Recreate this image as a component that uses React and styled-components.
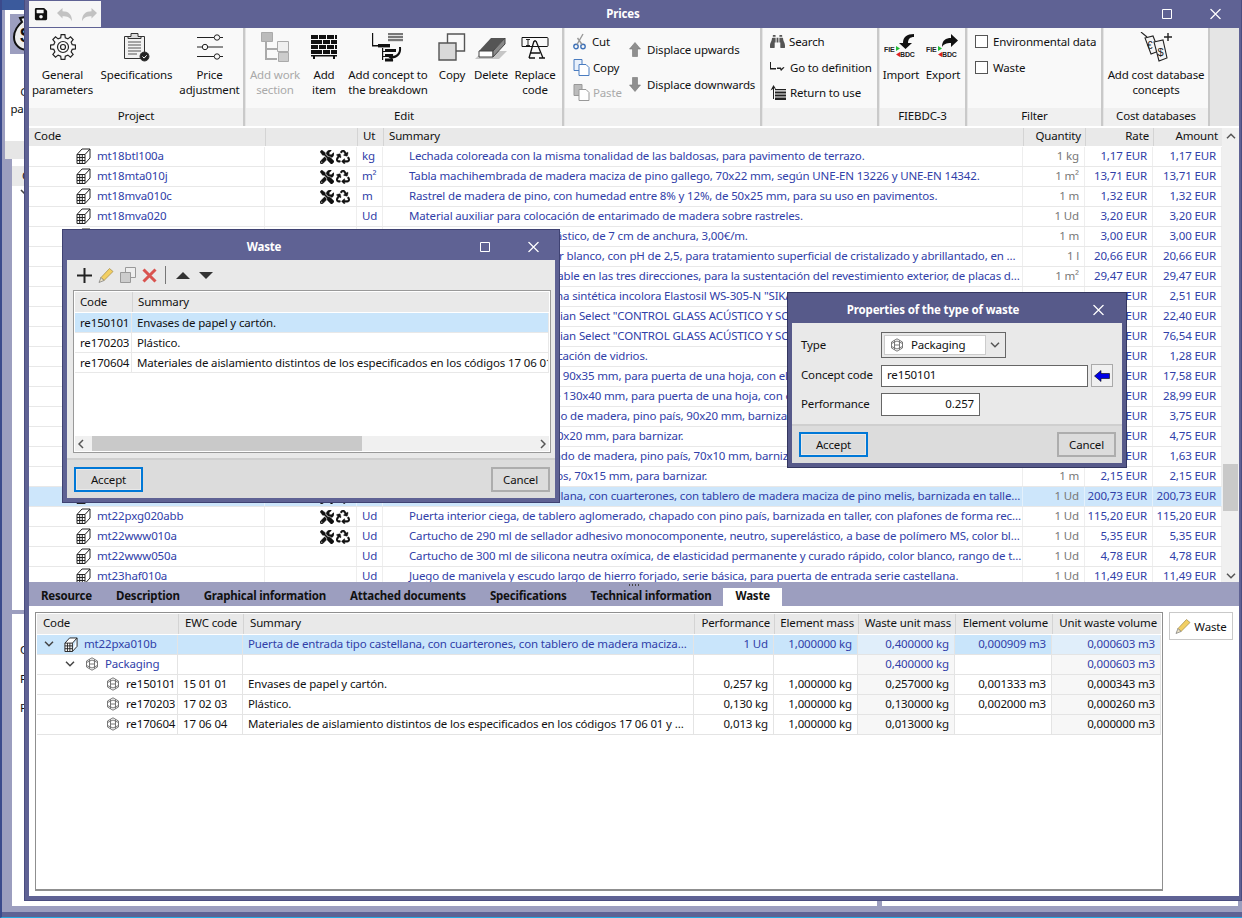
import React from "react";
import styled, { createGlobalStyle } from "styled-components";
import { FaTools, FaRecycle, FaSave, FaBinoculars } from "react-icons/fa";

const FONT = `"Noto Sans", "Open Sans", sans-serif`;
const FRAME = "#5f6294";
const LAV = "#9c9ebf";
const BLUE = "#3040a8";

const Global = createGlobalStyle`
  html, body { margin: 0; padding: 0; background: #fff; overflow: hidden; }
  * { box-sizing: border-box; }
`;

const Desk = styled.div`
  position: relative; width: 1242px; height: 918px; overflow: hidden;
  font: 11.5px/15px ${FONT}; letter-spacing: -0.15px; color: #111; background: #fff;
`;

/* ---------- back window ---------- */
const BackWin = styled.div`
  position: absolute; inset: 0; display: flex; flex-direction: column;
  border-left: 2px solid #3b4a8c; border-bottom: 1px solid #25a9e0; background: ${LAV};
`;
const BackTop = styled.div`height: 10px; background: #3b5a9c; flex: none;`;
const BackRibbon = styled.div`
  height: 131px; flex: none; background: #fff; margin-left: 3px; padding: 4px 0 0 5px;
`;
const BackBtnText = styled.div`margin: 26px 0 0 0; width: 62px; text-align: center; line-height: 17px;`;
const BackStrip = styled.div`height: 18px; flex: none; margin-left: 3px; background: #e6e6e6;`;
const BackBody = styled.div`height: 451px; flex: none; margin: 0 0 0 10px; background: #fff;`;
const BackHead = styled.div`height: 20px; margin-top: 7px; background: #e9e9e9; padding: 2px 0 0 10px;`;
const BackChevron = styled.svg`display: block; margin: 3px 0 0 8px;`;
const BackLower = styled.div`
  flex: 1; display: flex; margin: 4px 4px 0 10px; gap: 5px; margin-bottom: 0;
`;
const BackPane = styled.div`
  background: #fff; flex: ${(p) => p.$grow}; padding: 28px 0 0 8px; display: flex; flex-direction: column; gap: 14px;
`;
const BackBottom = styled.div`height: 11px; flex: none; background: linear-gradient(${LAV} 0 6px, ${FRAME} 6px);`;

/* ---------- windows ---------- */
const Win = styled.div`
  position: absolute; display: flex; flex-direction: column;
  left: ${(p) => p.$x}px; top: ${(p) => p.$y}px; width: ${(p) => p.$w}px; height: ${(p) => p.$h}px;
  background: ${(p) => p.$frame || FRAME};
  border: 1px solid ${(p) => p.$edge || "#3f4272"};
  padding: ${(p) => p.$pt ?? 0}px ${(p) => p.$pr ?? 4}px ${(p) => p.$pb ?? 4}px 4px;
`;
const TitleBar = styled.div`
  position: relative; height: ${(p) => p.$h}px; flex: none; display: flex; align-items: center; justify-content: center;
  color: #fff; font-weight: 700; font-size: 11.5px; padding-right: ${(p) => p.$off}px; padding-bottom: 1px;
`;
const WinBtn = styled.span`
  position: absolute; top: 50%; transform: translateY(-50%); right: ${(p) => p.$r}px; display: flex;
`;
const Qat = styled.div`
  position: absolute; left: 0; top: 1px; width: 72px; height: 26px; background: #f6f6f6;
  display: flex; align-items: center; gap: 8px; padding: 0 0 0 5px;
`;
const WinBody = styled.div`flex: 1; min-height: 0; display: flex; flex-direction: column; background: #fff;`;

/* ---------- ribbon ---------- */
const Ribbon = styled.div`height: 98px; flex: none; display: flex; background: #e5e5e5;`;
const Group = styled.div`
  width: ${(p) => p.$w}px; flex: none; display: flex; flex-direction: column;
  border-right: 2px solid #c9c9c9; margin-right: 1px; background: #f9f9f9;
`;
const GroupBody = styled.div`height: 80px; flex: none; display: flex; justify-content: ${(p) => p.$j || "flex-start"};`;
const GroupLabel = styled.div`
  height: 18px; flex: none; background: #f0f0f0; text-align: center; line-height: 16px;
`;
const RBtn = styled.div`
  width: ${(p) => p.$w}px; flex: none; text-align: center; padding-top: 1px;
  color: ${(p) => (p.$off ? "#a9a9a9" : "#111")}; white-space: nowrap;
`;
const RIcon = styled.div`height: 36px; display: flex; align-items: center; justify-content: center; margin-bottom: 2px;`;
const SmallCol = styled.div`
  display: flex; flex-direction: column; width: ${(p) => p.$w}px; flex: none; justify-content: ${(p) => p.$j || "flex-start"};
  padding: ${(p) => p.$pt ?? 5}px 0 0 ${(p) => p.$pl ?? 0}px; gap: ${(p) => p.$gap ?? 0}px;
`;
const SmallItem = styled.div`
  display: flex; align-items: center; gap: ${(p) => p.$gap ?? 3}px; height: ${(p) => p.$h || 25.5}px; white-space: nowrap;
  color: ${(p) => (p.$off ? "#a9a9a9" : "#111")};
  & > svg { flex: none; }
`;
const Check = styled.span`
  width: 13px; height: 13px; border: 1px solid #555; background: #fff; flex: none;
`;

/* ---------- main table ---------- */
const COLS = "236px 92px 26px 640px 62px 68px 69px";
const TableWrap = styled.div`
  height: 454px; flex: none; margin-top: 2px; display: flex; position: relative; overflow: hidden;
`;
const TableInner = styled.div`flex: 1; min-width: 0; overflow: hidden;`;
const HeadRow = styled.div`
  display: grid; grid-template-columns: ${COLS}; height: 18px; background: #e9e9e9; margin-bottom: 1px;
`;
const HeadCell = styled.div`
  padding: 0 ${(p) => (p.$right ? 4 : 5)}px; line-height: 16px; text-align: ${(p) => (p.$right ? "right" : "left")};
  border-left: ${(p) => (p.$first ? "0" : "1px solid #d4d4d4")};
  white-space: nowrap; overflow: hidden;
`;
const Row = styled.div`
  display: grid; grid-template-columns: ${COLS}; height: 20px; border-bottom: 1px solid #e8e8e8;
  background: ${(p) => (p.$sel ? "#cde6fb" : "#fff")}; color: ${BLUE};
`;
const Cell = styled.div`
  padding: 0 ${(p) => (p.$right ? 5 : 0)}px 0 ${(p) => p.$pl ?? 0}px; line-height: 18px; white-space: nowrap; overflow: hidden;
  text-overflow: ellipsis; text-align: ${(p) => (p.$right ? "right" : "left")};
  border-right: 1px solid ${(p) => (p.$sel ? "#e4f1fc" : "#eeeeee")};
  color: ${(p) => (p.$gray ? "#777" : "inherit")};
`;
const CodeCell = styled(Cell)`display: flex; align-items: center; gap: 6px; padding-bottom: 1px;`;
const IconCell = styled(Cell)`
  display: flex; align-items: center; justify-content: flex-end; gap: 2px; padding-right: 6px; color: #111;
  & > svg { stroke: currentColor; stroke-width: 14px; }
`;
const VScroll = styled.div`
  width: 17px; flex: none; background: #f0f0f0; position: relative; display: flex; flex-direction: column; justify-content: space-between; align-items: center; padding: 5px 0 3px;
`;
const VThumb = styled.div`position: absolute; left: 1px; right: 1px; top: 336px; height: 47px; background: #c9c9c9;`;

/* ---------- detail ---------- */
const TabBar = styled.div`
  height: 24px; flex: none; background: ${LAV}; display: flex; align-items: flex-end; padding-left: 12px; gap: 24px; position: relative;
`;
const Tab = styled.div`
  font-weight: 700; color: #111; height: 18px; line-height: 16px; white-space: nowrap; letter-spacing: -0.2px;
  ${(p) => p.$active && `background:#fff; padding:0 12px; margin-left:-12px;`}
`;
const Dots = styled.span`
  position: absolute; left: 600px; top: 2px; width: 12px; height: 2px;
  background: repeating-linear-gradient(90deg, #444 0 1px, transparent 1px 3px);
`;
const Detail = styled.div`flex: 1; min-height: 0; display: flex; padding: 6px; gap: 6px; background: #fff;`;
const WastePanel = styled.div`
  width: 1128px; height: 279px; flex: none; border: 1px solid #8f8f8f; border-bottom-width: 2px; padding: 1px;
`;
const WCOLS = "141px 65px 451px 80px 84px 97px 97px 109px";
const WHead = styled.div`display: grid; grid-template-columns: ${WCOLS}; height: 20px; background: #e9e9e9; margin-bottom: 1px;`;
const WHCell = styled.div`
  padding: 0 ${(p) => (p.$right ? 4 : 6)}px; line-height: 18px; white-space: nowrap; overflow: hidden;
  text-align: ${(p) => (p.$right ? "right" : "left")};
  border-left: ${(p) => (p.$first ? "0" : "1px solid #d4d4d4")};
`;
const WRow = styled.div`
  display: grid; grid-template-columns: ${WCOLS}; height: 20px; border-bottom: 1px solid #e4e4e4;
  background: ${(p) => (p.$sel ? "#c9e5fb" : "#fff")}; color: ${(p) => (p.$blue ? BLUE : "#111")};
`;
const WCell = styled.div`
  padding: 0 5px ${(p) => (p.$tree ? 1 : 0)}px ${(p) => p.$pl ?? 5}px; line-height: 18px; white-space: nowrap; overflow: hidden; text-overflow: ellipsis;
  text-align: ${(p) => (p.$right ? "right" : "left")};
  border-right: 1px solid #e4e4e4;
  background: ${(p) => (p.$tint ? (p.$sel ? "#e0eefa" : "#f7f7f7") : "transparent")};
  display: ${(p) => (p.$tree ? "flex" : "block")}; align-items: center; gap: 6px;
`;
const TreeChev = styled.span`display: flex; margin-right: 4px;`;
const WasteBtn = styled.div`
  width: 64px; height: 28px; border: 1px solid #c9c9c9; display: flex; align-items: center; justify-content: center; gap: 3px; background: #fff;
`;

/* ---------- dialogs ---------- */
const DlgBody = styled.div`flex: 1; display: flex; flex-direction: column; background: #e9e9e9; min-height: 0;`;
const DlgTools = styled.div`height: 30px; flex: none; display: flex; align-items: center; padding: 0 0 0 10px; gap: 6px;`;
const ToolSep = styled.span`width: 1px; height: 18px; background: #777; margin: 0 3px 0 2px;`;
const TriPair = styled.span`display: flex; align-items: center; gap: 9px; margin-left: 1px; & > svg { flex: none; }`;
const ListBox = styled.div`
  width: 478px; height: 163px; flex: none; margin-left: 6px; border: 1px solid #999; background: #fff; padding: 1px;
  display: flex; flex-direction: column; overflow: hidden;
`;
const LCOLS = "57px 1fr";
const LHead = styled.div`display: grid; grid-template-columns: ${LCOLS}; height: 20px; background: #e9e9e9; flex: none; margin-bottom: 1px;`;
const LHCell = styled.div`padding: 1px 0 0 5px; line-height: 18px; border-left: ${(p) => (p.$first ? "0" : "1px solid #d4d4d4")};`;
const LRow = styled.div`
  display: grid; grid-template-columns: ${LCOLS}; height: 20px; flex: none; border-bottom: 1px solid #e8e8e8;
  background: ${(p) => (p.$sel ? "#c9e5fb" : "#fff")};
`;
const LCell = styled.div`padding: 1px 0 0 5px; line-height: 18px; white-space: nowrap; overflow: hidden; border-right: 1px solid #e8e8e8;`;
const HScroll = styled.div`
  margin-top: auto; height: 15px; flex: none; background: #f0f0f0; display: flex; align-items: center; justify-content: space-between; position: relative; padding: 0 3px;
`;
const HThumb = styled.div`position: absolute; left: 17px; top: 0; width: 270px; height: 15px; background: #c9c9c9;`;
const DlgFoot = styled.div`
  margin-top: ${(p) => p.$mt}px; flex: 1; background: #dcdcdc; border-top: 2px solid #cfcfcf; display: flex; justify-content: space-between; align-items: flex-start;
  padding: ${(p) => p.$pt}px ${(p) => p.$pr}px 0 ${(p) => p.$pl}px;
`;
const Btn = styled.div`
  width: ${(p) => p.$w}px; height: ${(p) => p.$h}px; display: flex; align-items: center; justify-content: center; padding-bottom: 1px;
  border: ${(p) => (p.$primary ? "2px solid #0078d7" : "2px solid #adadad")};
  outline: 1px solid ${(p) => (p.$primary ? "#e9e9e9" : "transparent")}; outline-offset: -3px;
`;
const Form = styled.div`
  display: grid; grid-template-columns: 80px auto; align-items: center; padding: 9px 0 0 9px; row-gap: 6px; flex: none;
`;
const FLabel = styled.div`white-space: nowrap; padding-bottom: 2px;`;
const FRow = styled.div`display: flex; align-items: center; gap: 3px;`;
const SelectBox = styled.div`
  width: 125px; height: 26px; border: 1px solid #666; background: #e9e9e9; display: flex; align-items: stretch; padding: 2px;
`;
const SelectInner = styled.div`
  width: 102px; flex: none; background: #fff; border: 1px solid #ccc; display: flex; align-items: center; gap: 7px; padding: 0 0 1px 5px;
`;
const SelectArrow = styled.div`flex: 1; display: flex; align-items: center; justify-content: center;`;
const TextInput = styled.div`
  width: ${(p) => p.$w}px; height: ${(p) => p.$h}px; background: #fff; border: 1px solid #666; line-height: ${(p) => p.$h - 4}px;
  padding: 0 5px; text-align: ${(p) => (p.$right ? "right" : "left")};
`;
const ArrowBtn = styled.div`
  width: 22px; height: 23px; border: 1px solid #aaa; background: #f0f0f0; display: flex; align-items: center; justify-content: center;
`;

/* ---------- icons ---------- */
const Cube = ({ s = 15 }) => (
  <svg width={s} height={s + 1} viewBox="0 0 15 16" fill="none" stroke="#222" strokeWidth="1" style={{ flex: "none" }}>
    <path d="M1 6.5h8v9H1zM1 6.5 6 1h8L9 6.5M14 1v9l-5 5.500" fill="#fff" />
    <path d="M1 9.500h8M1 12.500h8M3.700 6.500v9M6.300 6.500v9" />
  </svg>
);
const WasteIco = ({ s = 14 }) => (
  <svg width={s} height={s} viewBox="0 0 14 14" fill="none" stroke="#777" strokeWidth="1" style={{ flex: "none" }}>
    <path d="M7 .8 12.500 4v6L7 13.200 1.500 10V4z" />
    <path d="M1.500 5.500 7 3l5.500 2.500M1.500 8.500 7 11l5.500-2.500M4.500 2.300v9.400M9.500 2.300v9.400M4.500 7h5" />
  </svg>
);
const Close = ({ s = 11 }) => (
  <svg width={s} height={s} viewBox="0 0 11 11" stroke="#fff" strokeWidth="1.2"><path d="M.5.5l10 10M10.500.5l-10 10" /></svg>
);
const Max = ({ s = 10 }) => (
  <svg width={s} height={s} viewBox="0 0 10 10" fill="none" stroke="#fff"><path d="M.5.5h9v9h-9z" /></svg>
);
const gearPath = (() => {
  const pts = [];
  const n = 8;
  for (let i = 0; i < n; i++) {
    const a = (i / n) * Math.PI * 2;
    const w = Math.PI / n;
    [[-0.62, 9.5], [-0.38, 12.6], [0.38, 12.6], [0.62, 9.5]].forEach(([k, r]) => {
      pts.push(`${(13 + Math.cos(a + k * w) * r).toFixed(2)} ${(13 + Math.sin(a + k * w) * r).toFixed(2)}`);
    });
  }
  return "M" + pts.join("L") + "Z";
})();
const Gear = () => (
  <svg width="26" height="26" viewBox="0 0 26 26" fill="none" stroke="#222" strokeWidth="1.2">
    <path d={gearPath} /><circle cx="13" cy="13" r="5.5" /><circle cx="13" cy="13" r="2.500" />
  </svg>
);
const Clipboard = () => (
  <svg width="27" height="30" viewBox="0 0 27 30" fill="none" stroke="#333">
    <path d="M1.500 4.500h20v22h-20z" fill="#f2f2f2" /><path d="M8 1.500h7v3h3v2H5v-2h3z" fill="#ddd" />
    <path d="M5 10h13M5 13h13M5 16h13M5 19h13M5 22h9" stroke="#555" />
    <circle cx="21.500" cy="24.500" r="4.500" fill="#222" /><path d="M19.500 24.500l1.600 1.600 2.600-2.800" stroke="#fff" />
  </svg>
);
const Sliders = () => (
  <svg width="28" height="26" viewBox="0 0 28 26" fill="none" stroke="#222">
    <path d="M1 3.500h17M24 3.500h3M1 13h5M12 13h15M1 22.500h17M24 22.500h3" /><circle cx="21" cy="3.500" r="2.700" /><circle cx="9" cy="13" r="2.700" /><circle cx="21" cy="22.500" r="2.700" />
  </svg>
);
const TreeIco = () => (
  <svg width="29" height="30" viewBox="0 0 29 30" fill="none" stroke="#aaa">
    <path d="M.5.5h11v9H.5z" fill="#bbb" /><path d="M5 10v17h11M5 17h11" strokeWidth="2" /><path d="M16.500 9.500h11v10h-11z" fill="#f0f0f0" /><path d="M17.500 20.500h10v9h-10z" fill="#ccc" />
  </svg>
);
const Bricks = () => (
  <svg width="26" height="24" viewBox="0 0 26 24" fill="#111">
    {[0, 5, 10, 15].map((y, r) => (
      <g key={y}>
        {(r % 2 ? [-4, 4, 12, 20] : [0, 8, 16, 24]).map((x) => (
          <rect key={x} x={Math.max(x, 0)} y={y} width={Math.min(7, 26 - Math.max(x, 0))} height="4" />
        ))}
      </g>
    ))}
    <path d="M0 20h26v1.500H0zM2 21.500h2V24H2zM22 21.500h2V24h-2z" />
  </svg>
);
const AddConcept = () => (
  <svg width="32" height="29" viewBox="0 0 32 29" fill="#111" stroke="none">
    <path d="M0 0h1.200v12H6v1.500H0z" /><rect x="6" y="11" width="12" height="3.400" />
    <path d="M10 15h1.200v12H10zM11 18h2v1h-2zM11 23h2v1h-2z" /><rect x="13" y="16" width="11" height="3" /><rect x="13" y="21" width="8" height="3" /><rect x="13" y="25.500" width="8" height="3" />
    <g fill="#777">{[0, 3, 6].map((y) => <rect key={y} x="16" y={y} width="15" height="2.200" />)}</g>
    <path d="M27 14c1 6-3 9-7 9l1.500-2.200-5 3.500 5 3.400L20 25.500c5 0 10-4 9-11.500z" />
  </svg>
);
const CopyBig = () => (
  <svg width="28" height="28" viewBox="0 0 28 28" fill="none" stroke="#555" strokeWidth="1.4">
    <path d="M9.500 1h17v17h-17z" fill="#f9f9f9" /><path d="M1 10h17v17H1z" fill="#d9d9d9" />
  </svg>
);
const Eraser = () => (
  <svg width="32" height="26" viewBox="0 0 32 26">
    <path d="M0 25l8-8h24l-8 8z" fill="#c6c6c6" />
    <path d="M4 17 16 4h14L18 17z" fill="#555" /><path d="M4 17h14v6H4z" fill="#fff" stroke="#444" /><path d="M18 17 30 4v6L18 23z" fill="#888" stroke="#444" />
  </svg>
);
const Replace = () => (
  <svg width="28" height="23" viewBox="0 0 28 23" fill="none" stroke="#111">
    <path d="M1 1.500h25q1 0 1 1v7q0 1-1 1H1z" />
    <path d="M5 3.500h4M7 3.500v6M5 9.500h4" strokeWidth=".9" />
    <path d="M8 22h6M18 22h6M13 5l-5 17M15 5l7 17M10 17h9M13 5h2" strokeWidth="1.300" />
  </svg>
);
const Scissors = () => (
  <svg width="14" height="17" viewBox="0 0 14 17" fill="none" stroke="#3f72b8" strokeWidth="1.400"><circle cx="3" cy="13.500" r="2.200" /><circle cx="10" cy="13.500" r="2.200" /><path d="M4 11.500 10 1M9 11.500 4.500 5" stroke="#999" /></svg>
);
const CopySmall = ({ off }) => (
  <svg width="17" height="17" viewBox="0 0 17 17" fill="#fff" stroke={off ? "#999" : "#4a7cc0"}>
    <path d="M1 .5h8l0 11H1z" fill={off ? "#bbb" : "#e8f0fb"} /><path d="M6 5.500h7l3 3v8H6z" />
  </svg>
);
const DisplaceArrow = ({ down }) => (
  <svg width="12" height="15" viewBox="0 0 12 15" fill="#8f8f8f" stroke="#777" strokeWidth=".6" style={down ? { transform: "scaleY(-1)" } : undefined}>
    <path d="M6 .5 11.500 7H8.500v7.500h-5V7H.5z" />
  </svg>
);
const GoDef = () => (
  <svg width="16" height="10" viewBox="0 0 16 10" fill="#222"><path d="M0 0h1v6h5v1.600H0zM7 5.500h4v1.600H7zM11.500 6.500l2-1.500 1 .5L11 9l-1-2z" /></svg>
);
const Ret = () => (
  <svg width="16" height="15" viewBox="0 0 16 15" fill="#222"><path d="M5 4h11v1.200H5zM5 6.500h11v2H5zM5 9.500h11v2H5zM5 12.500h11V15H5z" /><path d="M3 14V4L.5 5.500 3.500 0 6 4 4 3.200V14z" /></svg>
);
const Fie = ({ out }) => (
  <svg width="34" height="30" viewBox="0 0 34 30">
    <text x="0" y="20" fontFamily="Liberation Sans" fontWeight="700" fontSize="7" fill="#222">FIE</text>
    <text x="16" y="25" fontFamily="Liberation Sans" fontWeight="700" fontSize="7" fill="#222">BDC</text>
    <path d="M12 14v5l4-2.500z" fill="#22bb33" /><path d="M16 20v5l-4-2.500z" fill="#dd2222" />
    {out ? <path d="M16 15c0-7 4-9 9-9V2l7 6.500-7 6.500v-4c-5 0-7 1-9 4z" fill="#111" /> : <path d="M30 2c-7 0-11 3-11 9h-4l6.500 6 6.500-6h-4c0-4 2-6 6-6z" fill="#111" />}
  </svg>
);
const Tags = () => (
  <svg width="33" height="30" viewBox="0 0 33 30" fill="#f5f5f5" stroke="#222" strokeWidth="1.100">
    <path d="M1 0l6 5" /><path d="M5 6l8-2 6 15-8 3z" /><path d="M14 10l9-2 4 18-8 3z" />
    <path d="M24 5h8M28 1v8" fill="none" strokeWidth="1.400" />
    <text x="7" y="17" fontFamily="Liberation Sans" fontSize="10" fill="#222" stroke="none">€</text>
    <text x="17.500" y="24" fontFamily="Liberation Sans" fontSize="11" fill="#222" stroke="none">$</text>
  </svg>
);
const Pencil = ({ s = 16 }) => (
  <svg width={s} height={s} viewBox="0 0 16 16" style={{ flex: "none" }}>
    <path d="M3 10.500 11.500 1.500l3.500 3L6 13.500z" fill="#f2cf63" stroke="#a08a45" strokeWidth=".7" />
    <path d="M3 10.500 1 15.500l5-2z" fill="#ece2c6" stroke="#777" strokeWidth=".7" />
  </svg>
);
const UndoIco = ({ flip }) => (
  <svg width="17" height="15" viewBox="0 0 17 15" style={flip ? { transform: "scaleX(-1)" } : undefined}>
    <path d="M1 6 6.500 1v3.200c6 0 9.500 3 9.500 10-2-4-4.500-5-9.500-5V11.500z" fill="#c2c2c2" />
  </svg>
);
const Chev = ({ up, c = "#555", w = 10 }) => (
  <svg width={w} height="6" viewBox="0 0 10 6" fill="none" stroke={c} strokeWidth="1.500" style={up ? { transform: "scaleY(-1)" } : undefined}><path d="M1 .8 5 4.800 9 .8" /></svg>
);
const ChevSide = ({ left }) => (
  <svg width="6" height="10" viewBox="0 0 6 10" fill="none" stroke="#555" strokeWidth="1.500" style={left ? { transform: "scaleX(-1)" } : undefined}><path d="M1 1l4 4-4 4" /></svg>
);
const Tri = ({ down }) => (
  <svg width="14" height="7" viewBox="0 0 14 7" fill="#333"><path d={down ? "M0 0h14L7 7z" : "M7 0l7 7H0z"} /></svg>
);
const MoneyBag = () => (
  <svg width="34" height="40" viewBox="0 0 34 40">
    <rect width="34" height="40" fill={LAV} />
    <path d="M10 4l10-2 4 6c5 3 8 9 8 15 0 8-6 13-14 13S4 31 4 23c0-6 4-12 8-15z" fill="#eee" stroke="#111" strokeWidth="2" />
    <text x="10" y="28" fontFamily="Liberation Sans" fontSize="20" fontWeight="700" fill="#111">$</text>
  </svg>
);

/* ---------- data ---------- */
const rows = [
  ["mt18btl100a", 1, "kg", "Lechada coloreada con la misma tonalidad de las baldosas, para pavimento de terrazo.", "1 kg", "1,17 EUR", "1,17 EUR"],
  ["mt18mta010j", 1, "m²", "Tabla machihembrada de madera maciza de pino gallego, 70x22 mm, según UNE-EN 13226 y UNE-EN 14342.", "1 m²", "13,71 EUR", "13,71 EUR"],
  ["mt18mva010c", 1, "m", "Rastrel de madera de pino, con humedad entre 8% y 12%, de 50x25 mm, para su uso en pavimentos.", "1 m", "1,32 EUR", "1,32 EUR"],
  ["mt18mva020", 0, "Ud", "Material auxiliar para colocación de entarimado de madera sobre rastreles.", "1 Ud", "3,20 EUR", "3,20 EUR"],
  ["mt18war010", 0, "m", "Bandas autoadhesivas de plástico, de 7 cm de anchura, 3,00€/m.", "1 m", "3,00 EUR", "3,00 EUR"],
  ["mt18war020", 0, "l", "Limpiador líquido de un color blanco, con pH de 2,5, para tratamiento superficial de cristalizado y abrillantado, en pavimentos de terrazo.", "1 l", "20,66 EUR", "20,66 EUR"],
  ["mt20war010", 0, "m²", "Subestructura soporte regulable en las tres direcciones, para la sustentación del revestimiento exterior, de placas de fibrocemento.", "1 m²", "29,47 EUR", "29,47 EUR"],
  ["mt21war010", 0, "Ud", "Cartucho de silicona, de resina sintética incolora Elastosil WS-305-N \"SIKA\", para sellado.", "1 Ud", "2,51 EUR", "2,51 EUR"],
  ["mt21war020", 0, "m²", "Doble acristalamiento Guardian Select \"CONTROL GLASS ACÚSTICO Y SOLAR\", de baja emisividad.", "1 m²", "22,40 EUR", "22,40 EUR"],
  ["mt21war030", 0, "m²", "Doble acristalamiento Guardian Select \"CONTROL GLASS ACÚSTICO Y SOLAR\", de baja emisividad.", "1 m²", "76,54 EUR", "76,54 EUR"],
  ["mt21war040", 0, "Ud", "Material auxiliar para la colocación de vidrios.", "1 Ud", "1,28 EUR", "1,28 EUR"],
  ["mt22pxa010a", 0, "m", "Precerco de madera de pino, 90x35 mm, para puerta de una hoja, con elementos de fijación.", "1 m", "17,58 EUR", "17,58 EUR"],
  ["mt22pxa010b", 0, "m", "Cerco de madera de pino, de 130x40 mm, para puerta de una hoja, con elementos de fijación.", "1 m", "28,99 EUR", "28,99 EUR"],
  ["mt22pxa020a", 0, "m", "Galce de tablero DM, chapado de madera, pino país, 90x20 mm, barnizado.", "1 m", "3,75 EUR", "3,75 EUR"],
  ["mt22pxa030a", 0, "m", "Galce de pino país macizo, 90x20 mm, para barnizar.", "1 m", "4,75 EUR", "4,75 EUR"],
  ["mt22pxa040a", 0, "m", "Tapajunta de MDF con chapado de madera, pino país, 70x10 mm, barnizado.", "1 m", "1,63 EUR", "1,63 EUR"],
  ["mt22pxa050a", 0, "m", "Tapajunta de madera de pinos, 70x15 mm, para barnizar.", "1 m", "2,15 EUR", "2,15 EUR"],
  ["mt22pxa010b", 1, "Ud", "Puerta de entrada tipo castellana, con cuarterones, con tablero de madera maciza de pino melis, barnizada en taller, con herrajes de colgar.", "1 Ud", "200,73 EUR", "200,73 EUR", true],
  ["mt22pxg020abb", 1, "Ud", "Puerta interior ciega, de tablero aglomerado, chapado con pino país, barnizada en taller, con plafones de forma recta y herrajes.", "1 Ud", "115,20 EUR", "115,20 EUR"],
  ["mt22www010a", 1, "Ud", "Cartucho de 290 ml de sellador adhesivo monocomponente, neutro, superelástico, a base de polímero MS, color blanco, para juntas.", "1 Ud", "5,35 EUR", "5,35 EUR"],
  ["mt22www050a", 0, "Ud", "Cartucho de 300 ml de silicona neutra oxímica, de elasticidad permanente y curado rápido, color blanco, rango de temperatura de trabajo.", "1 Ud", "4,78 EUR", "4,78 EUR"],
  ["mt23haf010a", 0, "Ud", "Juego de manivela y escudo largo de hierro forjado, serie básica, para puerta de entrada serie castellana.", "1 Ud", "11,49 EUR", "11,49 EUR"],
];

const wasteRows = [
  { sel: true, blue: true, pl: 7, chev: true, icon: <Cube s={14} />, code: "mt22pxa010b", ewc: "", sum: "Puerta de entrada tipo castellana, con cuarterones, con tablero de madera maciza de pino melis, barnizada en taller", perf: "1 Ud", em: "1,000000 kg", wum: "0,400000 kg", ev: "0,000909 m3", uwv: "0,000603 m3" },
  { blue: true, pl: 28, chev: true, icon: <WasteIco />, code: "Packaging", ewc: "", sum: "", perf: "", em: "", wum: "0,400000 kg", ev: "", uwv: "0,000603 m3" },
  { pl: 69, icon: <WasteIco />, code: "re150101", ewc: "15 01 01", sum: "Envases de papel y cartón.", perf: "0,257 kg", em: "1,000000 kg", wum: "0,257000 kg", ev: "0,001333 m3", uwv: "0,000343 m3" },
  { pl: 69, icon: <WasteIco />, code: "re170203", ewc: "17 02 03", sum: "Plástico.", perf: "0,130 kg", em: "1,000000 kg", wum: "0,130000 kg", ev: "0,002000 m3", uwv: "0,000260 m3" },
  { pl: 69, icon: <WasteIco />, code: "re170604", ewc: "17 06 04", sum: "Materiales de aislamiento distintos de los especificados en los códigos 17 06 01 y 17 06 03 de la lista europea.", perf: "0,013 kg", em: "1,000000 kg", wum: "0,013000 kg", ev: "", uwv: "0,000000 m3" },
];

function PricesRibbon() {
  return (
    <Ribbon>
      <Group $w={216}>
        <GroupBody>
          <RBtn $w={67}><RIcon><Gear /></RIcon>General<br />parameters</RBtn>
          <RBtn $w={81}><RIcon><Clipboard /></RIcon>Specifications</RBtn>
          <RBtn $w={65}><RIcon><Sliders /></RIcon>Price<br />adjustment</RBtn>
        </GroupBody>
        <GroupLabel>Project</GroupLabel>
      </Group>
      <Group $w={318}>
        <GroupBody>
          <RBtn $w={58} $off><RIcon><TreeIco /></RIcon>Add work<br />section</RBtn>
          <RBtn $w={40}><RIcon><Bricks /></RIcon>Add<br />item</RBtn>
          <RBtn $w={88}><RIcon><AddConcept /></RIcon>Add concept to<br />the breakdown</RBtn>
          <RBtn $w={40}><RIcon><CopyBig /></RIcon>Copy</RBtn>
          <RBtn $w={38}><RIcon><Eraser /></RIcon>Delete</RBtn>
          <RBtn $w={50}><RIcon><Replace /></RIcon>Replace<br />code</RBtn>
        </GroupBody>
        <GroupLabel>Edit</GroupLabel>
      </Group>
      <Group $w={197}>
        <GroupBody>
          <SmallCol $w={58} $pl={8} $pt={1}>
            <SmallItem $gap={5}><Scissors />Cut</SmallItem>
            <SmallItem $gap={3}><CopySmall />Copy</SmallItem>
            <SmallItem $off $gap={3}><CopySmall off />Paste</SmallItem>
          </SmallCol>
          <SmallCol $w={134} $pl={6} $pt={9} $gap={9}>
            <SmallItem $gap={6}><DisplaceArrow />Displace upwards</SmallItem>
            <SmallItem $gap={6}><DisplaceArrow down />Displace downwards</SmallItem>
          </SmallCol>
        </GroupBody>
        <GroupLabel />
      </Group>
      <Group $w={116}>
        <GroupBody>
          <SmallCol $w={114} $pl={7} $pt={1}>
            <SmallItem $gap={4}><FaBinoculars size={15} color="#555" />Search</SmallItem>
            <SmallItem $gap={4}><GoDef />Go to definition</SmallItem>
            <SmallItem $gap={4}><Ret />Return to use</SmallItem>
          </SmallCol>
        </GroupBody>
        <GroupLabel />
      </Group>
      <Group $w={87}>
        <GroupBody>
          <RBtn $w={42}><RIcon><Fie /></RIcon>Import</RBtn>
          <RBtn $w={42}><RIcon><Fie out /></RIcon>Export</RBtn>
        </GroupBody>
        <GroupLabel>FIEBDC-3</GroupLabel>
      </Group>
      <Group $w={135}>
        <GroupBody>
          <SmallCol $w={130} $pl={7} $pt={0}>
            <SmallItem $gap={5} $h={26}><Check />Environmental data</SmallItem>
            <SmallItem $gap={5} $h={26}><Check />Waste</SmallItem>
          </SmallCol>
        </GroupBody>
        <GroupLabel>Filter</GroupLabel>
      </Group>
      <Group $w={106}>
        <GroupBody $j="center">
          <RBtn $w={104}><RIcon><Tags /></RIcon>Add cost database<br />concepts</RBtn>
        </GroupBody>
        <GroupLabel>Cost databases</GroupLabel>
      </Group>
    </Ribbon>
  );
}

function PriceTable() {
  return (
    <TableWrap>
      <TableInner>
        <HeadRow>
          <HeadCell $first>Code</HeadCell><HeadCell /><HeadCell>Ut</HeadCell><HeadCell>Summary</HeadCell>
          <HeadCell $right>Quantity</HeadCell><HeadCell $right>Rate</HeadCell><HeadCell $right>Amount</HeadCell>
        </HeadRow>
        {rows.map((r, i) => (
          <Row key={i} $sel={r[7]}>
            <CodeCell $pl={47} $sel={r[7]}><Cube />{r[0]}</CodeCell>
            <IconCell $sel={r[7]}>{r[1] ? <><FaTools size={14} /><FaRecycle size={14} /></> : null}</IconCell>
            <Cell $pl={5} $sel={r[7]}>{r[2]}</Cell>
            <Cell $pl={26} $sel={r[7]}>{r[3]}</Cell>
            <Cell $right $gray $sel={r[7]}>{r[4]}</Cell>
            <Cell $right $sel={r[7]}>{r[5]}</Cell>
            <Cell $right $sel={r[7]}>{r[6]}</Cell>
          </Row>
        ))}
      </TableInner>
      <VScroll><Chev up /><VThumb /><Chev /></VScroll>
    </TableWrap>
  );
}

function Tabs() {
  return (
    <TabBar>
      <Dots />
      <Tab>Resource</Tab><Tab>Description</Tab><Tab>Graphical information</Tab><Tab>Attached documents</Tab>
      <Tab>Specifications</Tab><Tab>Technical information</Tab><Tab $active>Waste</Tab>
    </TabBar>
  );
}

function WasteTable() {
  return (
    <Detail>
      <WastePanel>
        <WHead>
          <WHCell $first>Code</WHCell><WHCell>EWC code</WHCell><WHCell>Summary</WHCell><WHCell $right>Performance</WHCell>
          <WHCell $right>Element mass</WHCell><WHCell $right>Waste unit mass</WHCell><WHCell $right>Element volume</WHCell><WHCell $right>Unit waste volume</WHCell>
        </WHead>
        {wasteRows.map((r, i) => (
          <WRow key={i} $sel={r.sel} $blue={r.blue}>
            <WCell $tree $pl={r.pl}>{r.chev ? <TreeChev><Chev c="#444" /></TreeChev> : null}{r.icon}{r.code}</WCell>
            <WCell>{r.ewc}</WCell>
            <WCell>{r.sum}</WCell>
            <WCell $right>{r.perf}</WCell>
            <WCell $right>{r.em}</WCell>
            <WCell $right $tint $sel={r.sel}>{r.wum}</WCell>
            <WCell $right>{r.ev}</WCell>
            <WCell $right $tint $sel={r.sel}>{r.uwv}</WCell>
          </WRow>
        ))}
      </WastePanel>
      <WasteBtn><Pencil />Waste</WasteBtn>
    </Detail>
  );
}

function WasteDialog() {
  return (
    <Win $x={62} $y={229} $w={498} $h={274} $pt={4}>
      <TitleBar $h={26} $off={94}>Waste<WinBtn $r={65}><Max /></WinBtn><WinBtn $r={16}><Close /></WinBtn></TitleBar>
      <DlgBody>
        <DlgTools>
          <svg width="15" height="15" viewBox="0 0 15 15" fill="#222"><path d="M6.500 0h2v6.500H15v2H8.500V15h-2V8.500H0v-2h6.500z" /></svg>
          <Pencil />
          <svg width="16" height="16" viewBox="0 0 16 16" fill="#eee" stroke="#999"><path d="M5.500.5h10v10h-10z" /><path d="M.5 5.500h10v10H.5z" fill="#ccc" /></svg>
          <svg width="15" height="15" viewBox="0 0 15 15" stroke="#d9534f" strokeWidth="3"><path d="M1.500 1.500l12 12M13.500 1.500l-12 12" /></svg>
          <ToolSep />
          <TriPair><Tri /><Tri down /></TriPair>
        </DlgTools>
        <ListBox>
          <LHead><LHCell $first>Code</LHCell><LHCell>Summary</LHCell></LHead>
          <LRow $sel><LCell>re150101</LCell><LCell>Envases de papel y cartón.</LCell></LRow>
          <LRow><LCell>re170203</LCell><LCell>Plástico.</LCell></LRow>
          <LRow><LCell>re170604</LCell><LCell>Materiales de aislamiento distintos de los especificados en los códigos 17 06 01 y 17 06 03.</LCell></LRow>
          <HScroll><HThumb /><ChevSide left /><ChevSide /></HScroll>
        </ListBox>
        <DlgFoot $mt={5} $pt={7} $pr={5} $pl={7}>
          <Btn $primary $w={69} $h={25}>Accept</Btn>
          <Btn $w={59} $h={25}>Cancel</Btn>
        </DlgFoot>
      </DlgBody>
    </Win>
  );
}

function PropsDialog() {
  return (
    <Win $x={787} $y={292} $w={340} $h={176} $frame="#575a8a" $edge="#33365f" $pt={4}>
      <TitleBar $h={26} $off={48}>Properties of the type of waste<WinBtn $r={18}><Close /></WinBtn></TitleBar>
      <DlgBody>
        <Form>
          <FLabel>Type</FLabel>
          <SelectBox>
            <SelectInner><WasteIco />Packaging</SelectInner>
            <SelectArrow><Chev /></SelectArrow>
          </SelectBox>
          <FLabel>Concept code</FLabel>
          <FRow>
            <TextInput $w={207} $h={22}>re150101</TextInput>
            <ArrowBtn>
              <svg width="16" height="12" viewBox="0 0 16 12" fill="#0000e6" stroke="#000" strokeWidth=".6"><path d="M.5 6 7 .5v3h8.500v5H7v3z" /></svg>
            </ArrowBtn>
          </FRow>
          <FLabel>Performance</FLabel>
          <TextInput $w={99} $h={23} $right>0.257</TextInput>
        </Form>
        <DlgFoot $mt={8} $pt={6} $pr={6} $pl={7}>
          <Btn $primary $w={69} $h={25}>Accept</Btn>
          <Btn $w={59} $h={25}>Cancel</Btn>
        </DlgFoot>
      </DlgBody>
    </Win>
  );
}

export default function App() {
  return (
    <Desk>
      <Global />
      <BackWin>
        <BackTop />
        <BackRibbon>
          <MoneyBag />
          <BackBtnText>General<br />parameters</BackBtnText>
        </BackRibbon>
        <BackStrip />
        <BackBody>
          <BackHead>Code</BackHead>
          <BackChevron width="14" height="8" viewBox="0 0 14 8" fill="none" stroke="#444" strokeWidth="1.600"><path d="M1 1l6 6 6-6" /></BackChevron>
        </BackBody>
        <BackLower>
          <BackPane $grow={868}><span>Code</span><span>Fixed</span><span>Price</span></BackPane>
          <BackPane $grow={353} />
        </BackLower>
        <BackBottom />
      </BackWin>

      <Win $x={24} $y={-1} $w={1218} $h={902} $pr={2} $edge="#4a4d80">
        <TitleBar $h={28} $off={22}>
          <Qat>
            <FaSave size={14} color="#111" />
            <UndoIco />
            <UndoIco flip />
          </Qat>
          Prices
          <WinBtn $r={67}><Max /></WinBtn>
          <WinBtn $r={18}><Close /></WinBtn>
        </TitleBar>
        <WinBody>
          <PricesRibbon />
          <PriceTable />
          <Tabs />
          <WasteTable />
        </WinBody>
      </Win>

      <WasteDialog />
      <PropsDialog />
    </Desk>
  );
}
